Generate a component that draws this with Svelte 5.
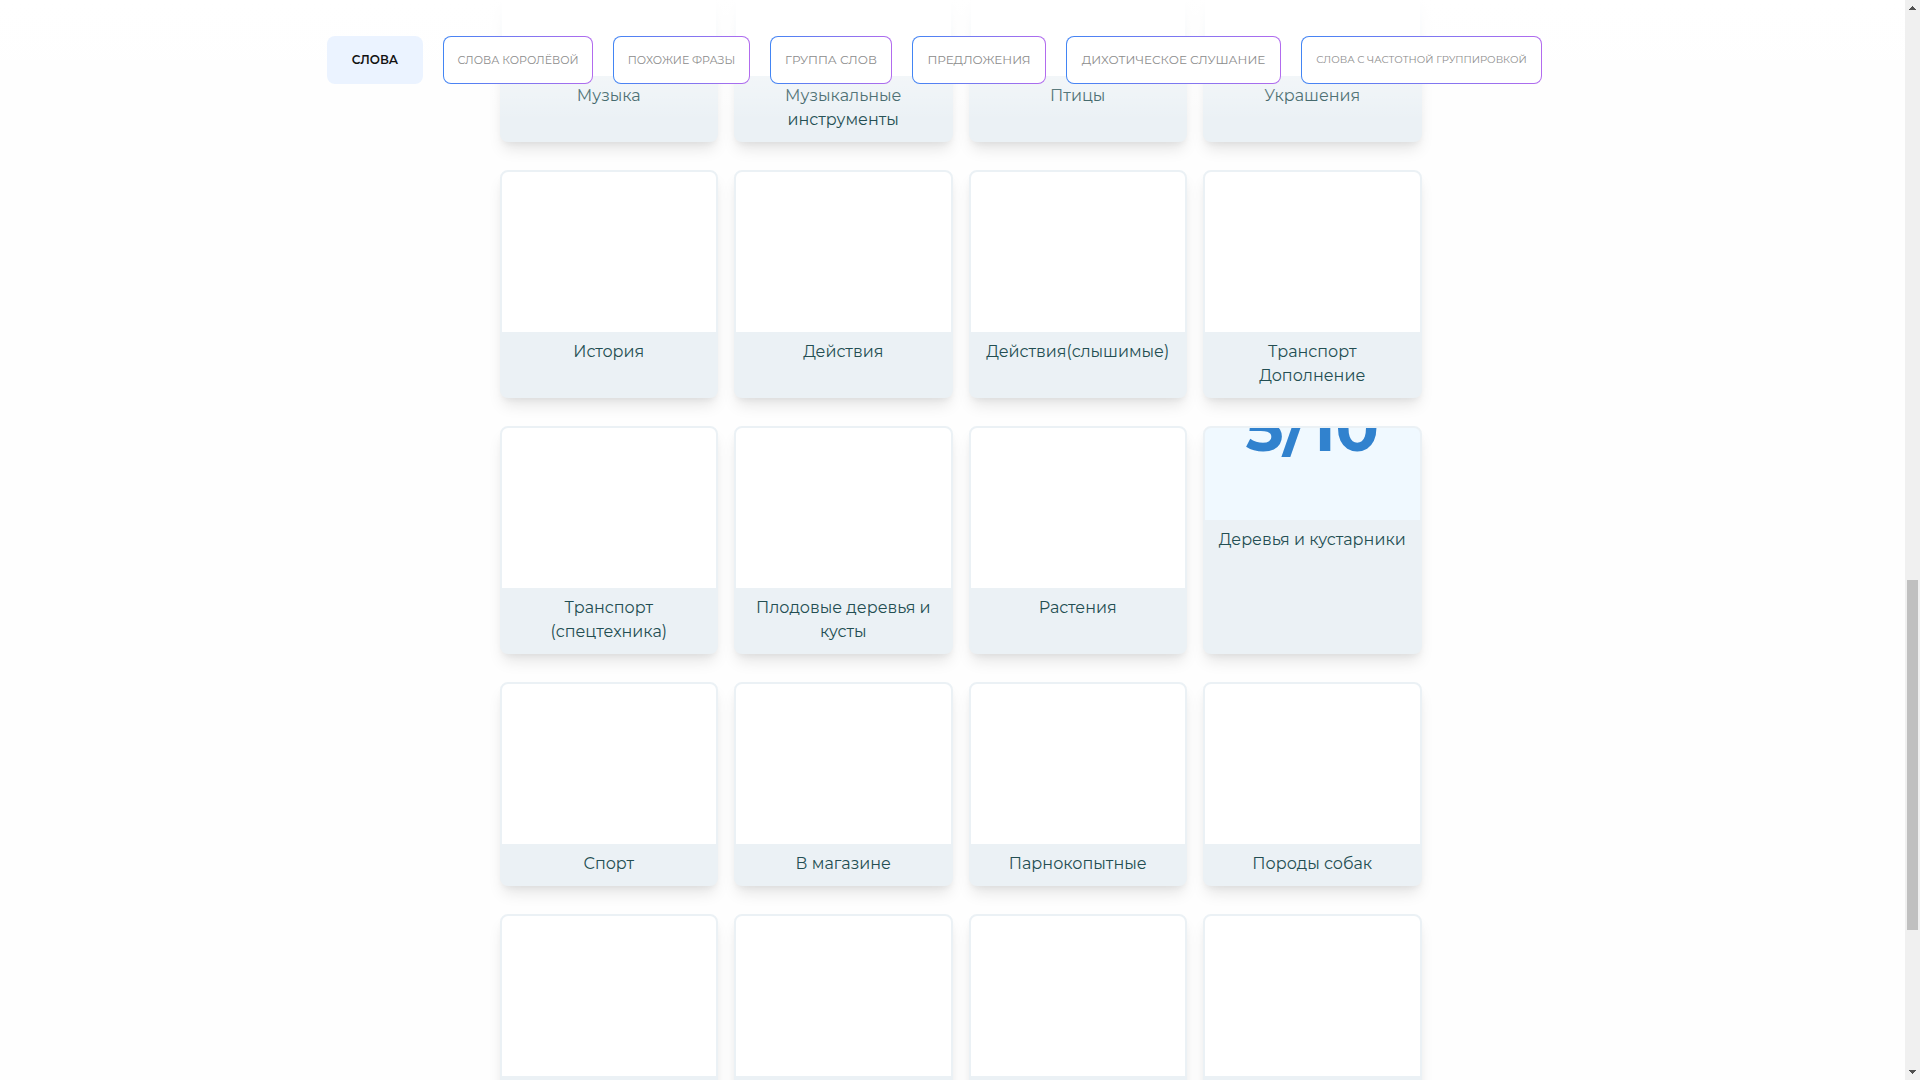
<script>
  const tabs = [
    { label: 'СЛОВА', active: true },
    { label: 'СЛОВА КОРОЛЁВОЙ', size: 'medium' },
    { label: 'ПОХОЖИЕ ФРАЗЫ', size: 'medium' },
    { label: 'ГРУППА СЛОВ' },
    { label: 'ПРЕДЛОЖЕНИЯ' },
    { label: 'ДИХОТИЧЕСКОЕ СЛУШАНИЕ' },
    { label: 'СЛОВА С ЧАСТОТНОЙ ГРУППИРОВКОЙ', size: 'small' }
  ];

  const cards = [
    { title: 'Музыка' },
    { title: 'Музыкальные инструменты' },
    { title: 'Птицы' },
    { title: 'Украшения' },
    { title: 'История' },
    { title: 'Действия' },
    { title: 'Действия(слышимые)' },
    { title: 'Транспорт Дополнение' },
    { title: 'Транспорт (спецтехника)' },
    { title: 'Плодовые деревья и кусты' },
    { title: 'Растения' },
    { title: 'Деревья и кустарники', score: '5/10' },
    { title: 'Спорт' },
    { title: 'В магазине' },
    { title: 'Парнокопытные' },
    { title: 'Породы собак' },
    { title: '' },
    { title: '' },
    { title: '' },
    { title: '' }
  ];
</script>

<div class="window">
  <div class="page">
    <main class="grid">
      {#each cards as card}
        <a class="card" href="#top">
          {#if card.score}
            <span class="score">{card.score}</span>
          {:else}
            <span class="picture"></span>
          {/if}
          <span class="title">{card.title}</span>
        </a>
      {/each}
    </main>
  </div>

  <header class="header">
    <nav class="tabs">
      {#each tabs as tab}
        <button type="button" class="tab {tab.size ?? ''}" class:active={tab.active}>{tab.label}</button>
      {/each}
    </nav>
  </header>

  <div class="scrollbar">
    <svg width="15" height="15" viewBox="0 0 15 15" shape-rendering="crispEdges"><path d="M4 10h7v-1h-1v-1h-1v-1h-1v-1h-1v1h-1v1h-1v1h-1z" fill="#505050" /></svg>
    <div class="track"><div class="thumb"></div></div>
    <svg width="15" height="15" viewBox="0 0 15 15" shape-rendering="crispEdges"><path d="M4 5h7v1h-1v1h-1v1h-1v1h-1v-1h-1v-1h-1v-1h-1z" fill="#505050" /></svg>
  </div>
</div>

<style>
  :global(body) {
    background: #fefefe;
    font-family: Montserrat, Inter, 'Open Sans', sans-serif;
  }

  .window {
    position: relative;
    display: flex;
    height: 100vh;
    overflow: hidden;
  }

  .page {
    flex: 1;
    padding-left: 16px;
  }

  .grid {
    display: grid;
    grid-template-columns: repeat(4, 1fr);
    gap: 28px 16px;
    max-width: 922px;
    margin: -86px auto 0;
  }

  .card {
    display: flex;
    flex-direction: column;
    overflow: hidden;
    border: 2px solid #ebf1f5;
    border-radius: 8px;
    background: #ebf1f5;
    box-shadow: 0 10px 15px -3px rgba(0, 0, 0, 0.1), 0 4px 6px -2px rgba(0, 0, 0, 0.05);
    color: #234e52;
    text-align: center;
    text-decoration: none;
  }

  .picture {
    height: 160px;
    background: #fff;
  }

  .score {
    height: 92px;
    overflow: hidden;
    background: #f0f9ff;
    color: #3182ce;
    font-size: 64px;
    font-weight: 700;
    line-height: 0;
  }

  .title {
    min-height: 24px;
    padding: 8px;
    font-size: 16px;
    line-height: 24px;
  }

  .header {
    position: absolute;
    top: 0;
    left: 0;
    right: 15px;
    padding: 36px 0 36px 327px;
    background: linear-gradient(#fff, rgba(255, 255, 255, 0));
  }

  .tabs {
    display: grid;
    grid-template-columns: 96px 150px 137px 122px 134px 215px 241px;
    gap: 20px;
  }

  .tab {
    height: 48px;
    padding: 0 0 1px;
    border: 1px solid transparent;
    border-radius: 8px;
    background: linear-gradient(#fff, #fff) padding-box, linear-gradient(to right, #4285f4, #b26bee) border-box;
    color: #8c8c8c;
    font-family: inherit;
    font-size: 12px;
    white-space: nowrap;
  }

  .tab.medium {
    font-size: 11px;
  }

  .tab.small {
    font-size: 10px;
  }

  .tab.active {
    background: #ebf3ff;
    color: #111;
    font-weight: 600;
  }

  .scrollbar {
    display: flex;
    flex-direction: column;
    width: 15px;
    background: #f0f0f0;
  }

  .track {
    flex: 1;
    padding: 565px 2px 0;
  }

  .thumb {
    height: 350px;
    background: #c0c0c0;
  }
</style>
